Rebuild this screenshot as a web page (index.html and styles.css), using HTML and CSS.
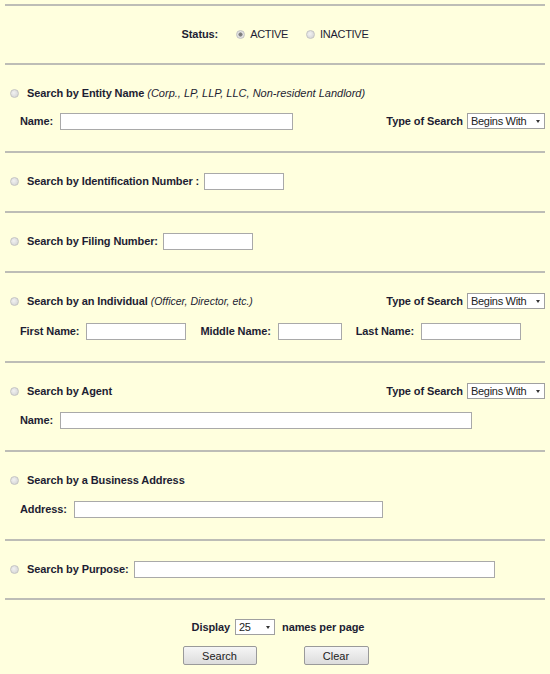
FILE: index.html
```html
<!DOCTYPE html>
<html lang="en">
<head>
    <meta charset="UTF-8">
    <meta name="viewport" content="width=device-width, initial-scale=1.0">
    <title>Business Entity Search</title>
    <link rel="stylesheet" href="styles.css">
</head>
<body>
    <form class="search-form">
        <div class="section status">
            <span class="label">Status:</span>
            <label class="opt"><input type="radio" name="status" checked> ACTIVE</label>
            <label class="opt"><input type="radio" name="status"> INACTIVE</label>
        </div>

        <div class="section">
            <div class="row title">
                <label><input type="radio" name="by"> <b>Search by Entity Name</b> <i>(Corp., LP, LLP, LLC, Non-resident Landlord)</i></label>
            </div>
            <div class="row fields">
                <span class="label">Name:</span>
                <input type="text" class="w-name">
                <span class="type-search">
                    <span class="label">Type of Search</span>
                    <span class="select-wrap"><select><option>Begins With</option></select></span>
                </span>
            </div>
        </div>

        <div class="section">
            <div class="row title">
                <label><input type="radio" name="by"> <b>Search by Identification Number :</b></label>
                <input type="text" class="w-id">
            </div>
        </div>

        <div class="section">
            <div class="row title">
                <label><input type="radio" name="by"> <b>Search by Filing Number:</b></label>
                <input type="text" class="w-filing">
            </div>
        </div>

        <div class="section tall">
            <div class="row title">
                <label><input type="radio" name="by"> <b>Search by an Individual</b> <i class="small">(Officer, Director, etc.)</i></label>
                <span class="type-search">
                    <span class="label">Type of Search</span>
                    <span class="select-wrap"><select><option>Begins With</option></select></span>
                </span>
            </div>
            <div class="row fields">
                <span class="label">First Name:</span>
                <input type="text" class="w-first">
                <span class="label spaced">Middle Name:</span>
                <input type="text" class="w-middle">
                <span class="label spaced">Last Name:</span>
                <input type="text" class="w-first">
            </div>
        </div>

        <div class="section mid">
            <div class="row title">
                <label><input type="radio" name="by"> <b>Search by Agent</b></label>
                <span class="type-search">
                    <span class="label">Type of Search</span>
                    <span class="select-wrap"><select><option>Begins With</option></select></span>
                </span>
            </div>
            <div class="row fields">
                <span class="label">Name:</span>
                <input type="text" class="w-agent">
            </div>
        </div>

        <div class="section mid">
            <div class="row title">
                <label><input type="radio" name="by"> <b>Search by a Business Address</b></label>
            </div>
            <div class="row fields">
                <span class="label">Address:</span>
                <input type="text" class="w-address">
            </div>
        </div>

        <div class="section short">
            <div class="row title">
                <label><input type="radio" name="by"> <b>Search by Purpose:</b></label>
                <input type="text" class="w-purpose">
            </div>
        </div>

        <div class="section footer">
            <div class="display">
                <span class="label">Display</span>
                <span class="select-wrap small-select"><select><option>25</option><option>50</option></select></span>
                <span class="label">names per page</span>
            </div>
            <div class="buttons">
                <button type="button" class="btn-search">Search</button>
                <button type="button" class="btn-clear">Clear</button>
            </div>
        </div>
    </form>
</body>
</html>
```

FILE: styles.css
```css
body {
    margin: 0;
    background: #ffffde;
    font-family: "Liberation Sans", Arial, sans-serif;
    font-size: 11px;
    color: #1d1d33;
}
.search-form {
    padding: 4px 5px 0;
}
.section {
    border-top: 2px solid #bdbdb6;
    padding: 18px 0 20px;
    display: flex;
    flex-direction: column;
    gap: 8px;
}
.section.mid {
    gap: 9px;
}
.section.tall {
    gap: 10px;
}
.section.short {
    padding-bottom: 19px;
}
.label, .row b {
    font-weight: bold;
    letter-spacing: -0.1px;
}
.row {
    display: flex;
    align-items: center;
    min-height: 20px;
}
.row.title {
    padding-left: 5px;
}
.row.title label {
    white-space: nowrap;
}
.row.title label input {
    vertical-align: -1px;
    margin-right: 5px;
}
.row.title input[type="text"] {
    margin-left: 5px;
}
.row.fields {
    padding-left: 15px;
}
.row i.small {
    font-size: 10.5px;
}
input[type="radio"] {
    appearance: none;
    -webkit-appearance: none;
    width: 9px;
    height: 9px;
    margin: 0 4px 0 0;
    border-radius: 50%;
    border: 1px solid #c4c4c4;
    background: radial-gradient(circle at 40% 40%, #f2f2f2, #cfcfcf);
    box-sizing: border-box;
    flex: none;
}
input[type="radio"]:checked {
    background: radial-gradient(circle, #777 0, #888 1.8px, #e8e8e8 2.4px, #d0d0d0 100%);
}
input[type="text"] {
    height: 17px;
    box-sizing: border-box;
    border: 1px solid #a9a9a9;
    background: #fff;
    margin: 0 0 0 7px;
    padding: 0 3px;
}
.w-name { width: 233px; }
.w-id { width: 80px; }
.w-filing { width: 90px; }
.w-first { width: 100px; }
.w-middle { width: 64px; }
.w-agent { width: 412px; }
.w-address { width: 309px; }
.w-purpose { width: 361px; }
.spaced {
    margin-left: 14px;
}
.type-search {
    margin-left: auto;
    display: flex;
    align-items: center;
    gap: 4px;
}
.select-wrap {
    position: relative;
    display: inline-block;
}
.select-wrap select {
    appearance: none;
    -webkit-appearance: none;
    height: 16px;
    width: 78px;
    box-sizing: border-box;
    border: 1px solid #a0a0a0;
    border-radius: 0;
    background: #fff;
    font-family: "Liberation Sans", Arial, sans-serif;
    font-size: 11px;
    letter-spacing: -0.3px;
    color: #222;
    padding: 0 0 0 3px;
    margin: 0;
}
.select-wrap::after {
    content: "";
    position: absolute;
    right: 5px;
    top: 7px;
    border-left: 2.5px solid transparent;
    border-right: 2.5px solid transparent;
    border-top: 3px solid #333;
    pointer-events: none;
}
.status {
    flex-direction: row;
    justify-content: center;
    align-items: center;
    min-height: 20px;
    gap: 0;
    padding: 18px 0 19px 0;
}
.status .opt {
    display: flex;
    align-items: center;
    margin-left: 18px;
    letter-spacing: -0.3px;
}
.status .opt input {
    margin-right: 5px;
}
.footer {
    align-items: center;
    padding-top: 19px;
    gap: 11px;
}
.display {
    display: flex;
    align-items: center;
    gap: 5px;
    padding-left: 6px;
}
.display .label:last-child {
    margin-left: 2px;
}
.small-select select {
    width: 40px;
}
.buttons {
    display: flex;
    gap: 47px;
    padding-left: 1px;
}
.buttons button {
    height: 19px;
    font-family: "Liberation Sans", Arial, sans-serif;
    font-size: 11px;
    color: #222;
    border: 1px solid #9a9a9a;
    border-radius: 2px;
    background: linear-gradient(#f6f6f6, #dcdcdc);
    padding: 0;
}
.btn-search { width: 74px; }
.btn-clear { width: 65px; }
```
